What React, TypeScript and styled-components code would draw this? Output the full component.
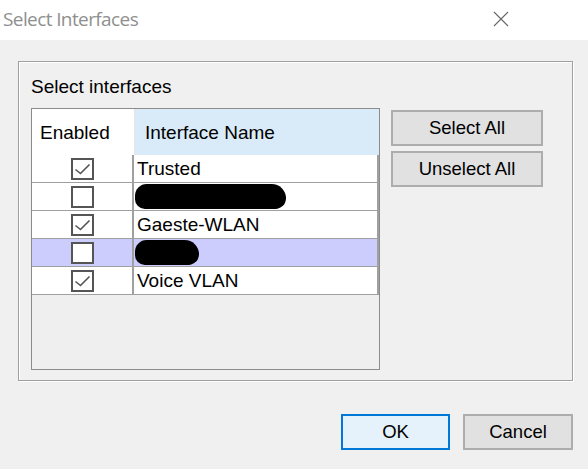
import React, { useState } from 'react';
import styled, { createGlobalStyle } from 'styled-components';

const GlobalStyle = createGlobalStyle`
  html, body {
    margin: 0;
    padding: 0;
    background: #f0f0f0;
  }
  * {
    box-sizing: border-box;
  }
`;

const Window = styled('div')({
  width: '588px',
  height: '469px',
  backgroundColor: '#f0f0f0',
  fontFamily: '"Liberation Sans", Arial, sans-serif',
  fontSize: '19px',
  color: '#000',
  display: 'flex',
  flexDirection: 'column',
  overflow: 'hidden',
});

const TitleBar = styled('header')({
  height: '40px',
  backgroundColor: '#fff',
  display: 'flex',
  alignItems: 'center',
  justifyContent: 'space-between',
  paddingLeft: '3px',
});

const Title = styled('div')({
  fontFamily: '"Open Sans", "Noto Sans", sans-serif',
  fontSize: '19px',
  letterSpacing: '-0.6px',
  color: '#8f8f8f',
  marginTop: '-3px',
});

const CloseButton = styled('div')({
  width: '16px',
  height: '16px',
  marginRight: '79px',
  marginTop: '-3px',
  display: 'flex',
});

const GroupBox = styled('section')({
  margin: '21px 15px 0 18px',
  height: '320px',
  border: '1px solid #a0a0a0',
  boxShadow: 'inset 1px 1px 0 #fff, 1px 1px 0 #fff',
  padding: '14px 12px 10px 12px',
  display: 'flex',
  flexDirection: 'column',
});

const GroupLabel = styled('div')({
  height: '22px',
  lineHeight: '22px',
  marginBottom: '10px',
});

const GroupContent = styled('div')({
  display: 'flex',
  gap: '11px',
  alignItems: 'flex-start',
});

const ListBox = styled('div')({
  width: '349px',
  height: '262px',
  border: '1px solid #8c8c8c',
  backgroundColor: '#efefef',
  display: 'flex',
  flexDirection: 'column',
});

const HeaderRow = styled('div')({
  height: '46px',
  display: 'flex',
  flexShrink: 0,
});

const HeaderCell = styled('div')<{ $hot?: boolean; $width?: number }>(
  ({ $hot = false, $width }) => ({
    display: 'flex',
    alignItems: 'center',
    paddingLeft: $hot ? '10px' : '8px',
    paddingTop: '2px',
    backgroundColor: $hot ? '#d9ebf9' : '#fff',
    borderRight: $hot ? 'none' : '1px solid #e5e5e5',
    ...($width ? { width: `${$width}px` } : { flex: 1 }),
  })
);

const Row = styled('div')<{ $selected?: boolean }>(({ $selected = false }) => ({
  height: '28px',
  display: 'flex',
  borderBottom: '1px solid #a0a0a0',
  borderRight: '2px solid #a0a0a0',
  backgroundColor: $selected ? '#ccccfd' : '#fff',
}));

const CheckCell = styled('div')({
  width: '102px',
  borderRight: '2px solid #a0a0a0',
  display: 'flex',
  alignItems: 'center',
  justifyContent: 'center',
  paddingLeft: '1px',
});

const NameCell = styled('div')({
  flex: 1,
  display: 'flex',
  alignItems: 'center',
  paddingLeft: '3px',
  whiteSpace: 'nowrap',
});

const CheckBox = styled('div')({
  width: '23px',
  height: '22px',
  border: '2px solid #555',
  backgroundColor: '#fff',
  display: 'flex',
  alignItems: 'center',
  justifyContent: 'center',
});

const Redaction = styled('div')<{ $width: number }>(({ $width }) => ({
  width: `${$width}px`,
  height: '25px',
  marginLeft: '-2px',
  backgroundColor: '#000',
  borderRadius: '13px 16px 12px 11px',
}));

const ButtonColumn = styled('div')({
  display: 'flex',
  flexDirection: 'column',
  gap: '5px',
  marginTop: '2px',
});

const Button = styled('button')<{ $default?: boolean; $width?: number }>(
  ({ $default = false, $width = 152 }) => ({
    width: `${$width}px`,
    height: '36px',
    fontFamily: '"Liberation Sans", Arial, sans-serif',
    fontSize: '18.5px',
    color: '#000',
    padding: 0,
    backgroundColor: $default ? '#e5f1fb' : '#e1e1e1',
    border: $default ? '2px solid #0078d7' : '2px solid #adadad',
    cursor: 'pointer',
  })
);

const Footer = styled('footer')({
  display: 'flex',
  justifyContent: 'flex-end',
  gap: '13px',
  padding: '33px 15px 0 0',
});

const CheckMark = () => (
  <svg width="17" height="16" viewBox="0 0 17 16">
    <path d="M1.5 8.5 L6.5 12.5 L15.5 3.5" fill="none" stroke="#555" strokeWidth="1.6" />
  </svg>
);

const CloseIcon = () => (
  <svg width="16" height="16" viewBox="0 0 16 16">
    <path d="M1 1 L15 15 M15 1 L1 15" stroke="#666" strokeWidth="1.1" />
  </svg>
);

type Iface = { id: number; name?: string; redacted?: number; enabled: boolean };

const initial: Iface[] = [
  { id: 1, name: 'Trusted', enabled: true },
  { id: 2, redacted: 151, enabled: false },
  { id: 3, name: 'Gaeste-WLAN', enabled: true },
  { id: 4, redacted: 64, enabled: false },
  { id: 5, name: 'Voice VLAN', enabled: true },
];

const App = (): JSX.Element => {
  const [rows, setRows] = useState(initial);
  const [selected, setSelected] = useState(4);

  const toggle = (id: number) =>
    setRows(rows.map((r) => (r.id === id ? { ...r, enabled: !r.enabled } : r)));
  const setAll = (enabled: boolean) => setRows(rows.map((r) => ({ ...r, enabled })));

  return (
    <>
      <GlobalStyle />
      <Window>
        <TitleBar>
          <Title>Select Interfaces</Title>
          <CloseButton>
            <CloseIcon />
          </CloseButton>
        </TitleBar>
        <GroupBox>
          <GroupLabel>Select interfaces</GroupLabel>
          <GroupContent>
            <ListBox>
              <HeaderRow>
                <HeaderCell $width={103}>Enabled</HeaderCell>
                <HeaderCell $hot>Interface Name</HeaderCell>
              </HeaderRow>
              {rows.map(({ id, name, redacted, enabled }) => (
                <Row key={id} $selected={id === selected} onClick={() => setSelected(id)}>
                  <CheckCell>
                    <CheckBox onClick={() => toggle(id)}>{enabled && <CheckMark />}</CheckBox>
                  </CheckCell>
                  <NameCell>{redacted ? <Redaction $width={redacted} /> : name}</NameCell>
                </Row>
              ))}
            </ListBox>
            <ButtonColumn>
              <Button onClick={() => setAll(true)}>Select All</Button>
              <Button onClick={() => setAll(false)}>Unselect All</Button>
            </ButtonColumn>
          </GroupContent>
        </GroupBox>
        <Footer>
          <Button $default $width={109}>
            OK
          </Button>
          <Button $width={110}>Cancel</Button>
        </Footer>
      </Window>
    </>
  );
};

export default App;
